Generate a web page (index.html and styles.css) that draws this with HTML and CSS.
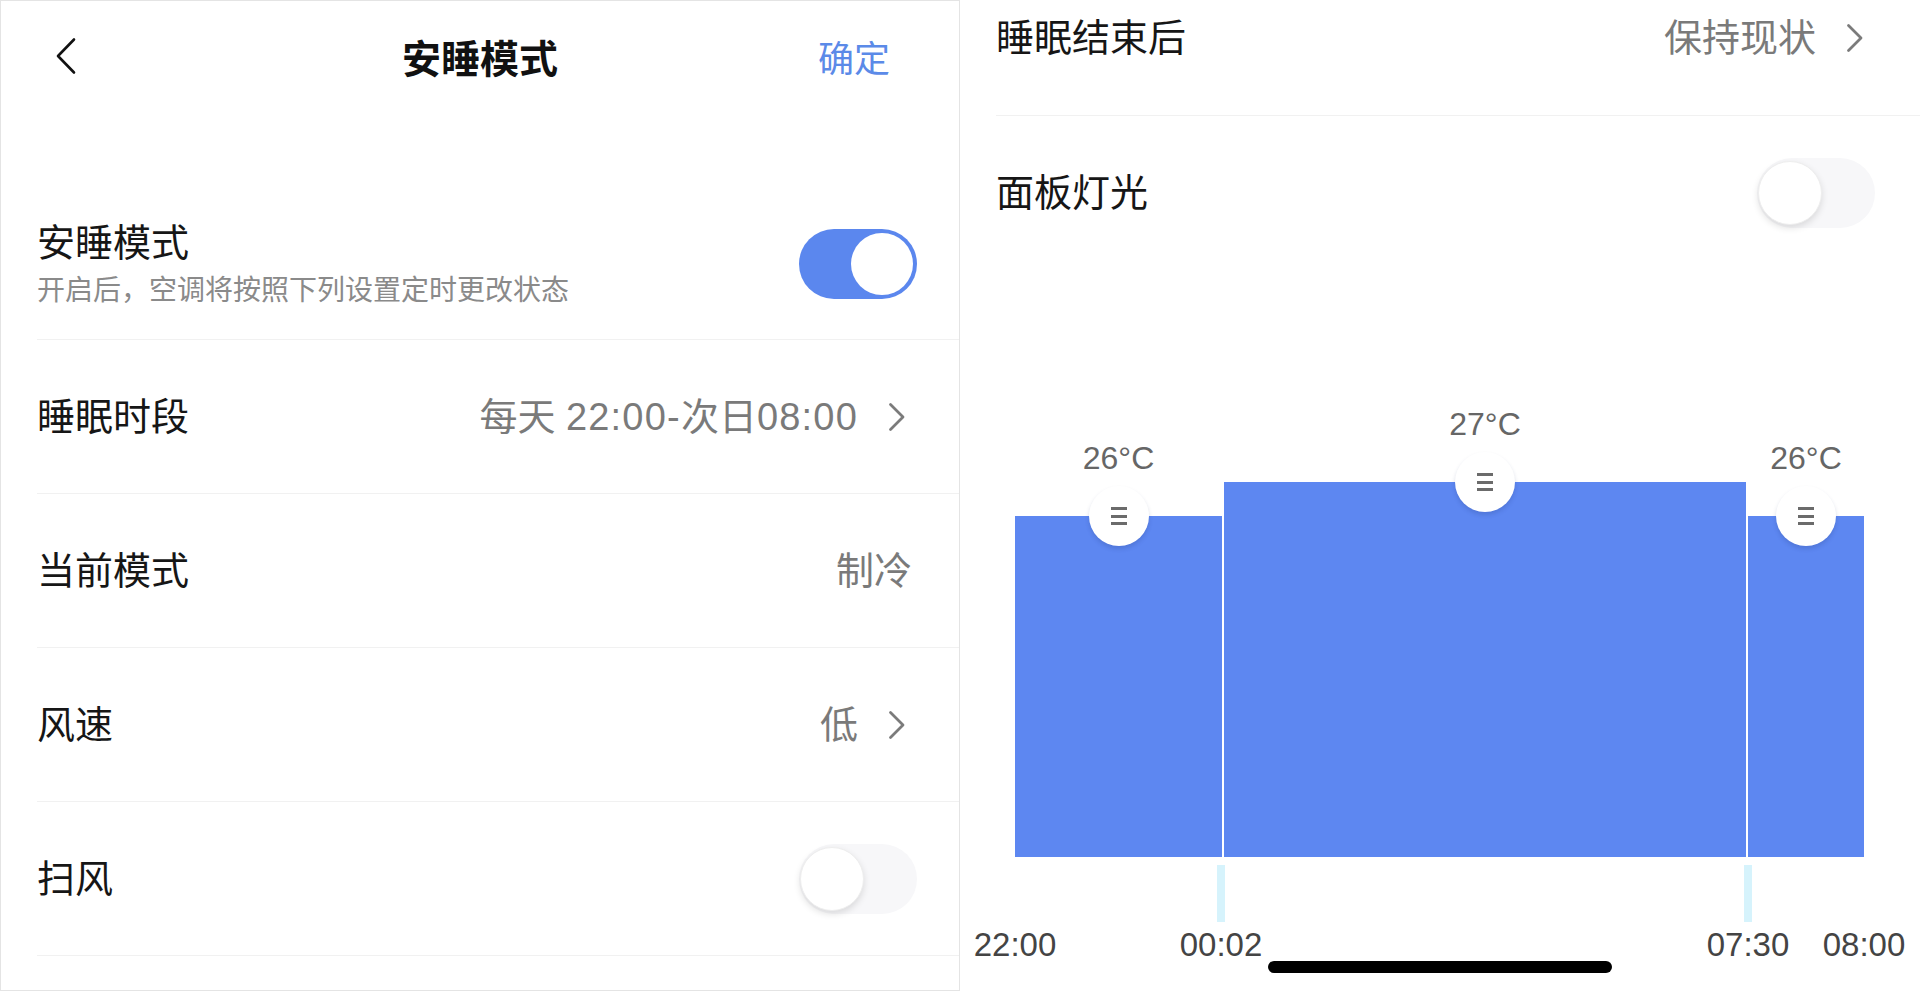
FILE: index.html
```html
<!DOCTYPE html>
<html lang="zh-CN">
<head>
<meta charset="utf-8">
<title>安睡模式</title>
<link rel="stylesheet" href="styles.css">
</head>
<body>
<div class="screen">
  <section class="panel panel-left">
    <header class="nav">
      <span class="nav-back">
        <svg width="22" height="38" viewBox="0 0 22 38"><polyline points="19,2.5 3,19 19,35.5" fill="none" stroke="#111" stroke-width="2.6" stroke-linecap="round" stroke-linejoin="round"/></svg>
      </span>
      <h1 class="nav-title">安睡模式</h1>
      <span class="nav-action">确定</span>
    </header>

    <div class="row row-main">
      <div class="row-text">
        <div class="row-label">安睡模式</div>
        <div class="row-sub">开启后，空调将按照下列设置定时更改状态</div>
      </div>
      <span class="switch switch-on"><span class="knob"></span></span>
    </div>

    <div class="row">
      <span class="row-label">睡眠时段</span>
      <span class="row-value">每天 <span class="num">22:00-</span>次日<span class="num">08:00</span></span>
      <svg class="chev" width="18" height="30" viewBox="0 0 18 30"><polyline points="2.5,2.5 15,15 2.5,27.5" fill="none" stroke="#7b7b7b" stroke-width="2.8" stroke-linecap="round" stroke-linejoin="round"/></svg>
    </div>

    <div class="row">
      <span class="row-label">当前模式</span>
      <span class="row-value row-value-plain">制冷</span>
    </div>

    <div class="row">
      <span class="row-label">风速</span>
      <span class="row-value">低</span>
      <svg class="chev" width="18" height="30" viewBox="0 0 18 30"><polyline points="2.5,2.5 15,15 2.5,27.5" fill="none" stroke="#7b7b7b" stroke-width="2.8" stroke-linecap="round" stroke-linejoin="round"/></svg>
    </div>

    <div class="row">
      <span class="row-label">扫风</span>
      <span class="switch switch-off"><span class="knob"></span></span>
    </div>
  </section>

  <section class="panel panel-right">
    <div class="row row-top">
      <span class="row-label">睡眠结束后</span>
      <span class="row-value">保持现状</span>
      <svg class="chev" width="18" height="30" viewBox="0 0 18 30"><polyline points="2.5,2.5 15,15 2.5,27.5" fill="none" stroke="#7b7b7b" stroke-width="2.8" stroke-linecap="round" stroke-linejoin="round"/></svg>
    </div>

    <div class="row row-plain">
      <span class="row-label">面板灯光</span>
      <span class="switch switch-off"><span class="knob"></span></span>
    </div>

    <div class="chart">
      <div class="seg" style="width:207px">
        <span class="temp">26°C</span>
        <div class="bar" style="height:341px"><span class="handle"><i></i><i></i><i></i></span></div>
      </div>
      <div class="seg" style="width:522px">
        <span class="temp">27°C</span>
        <div class="bar" style="height:375px"><span class="handle"><i></i><i></i><i></i></span></div>
      </div>
      <div class="seg" style="width:116px">
        <span class="temp">26°C</span>
        <div class="bar" style="height:341px"><span class="handle"><i></i><i></i><i></i></span></div>
      </div>
    </div>

    <div class="axis">
      <span class="tick" style="left:202px"></span>
      <span class="tick" style="left:729px"></span>
      <span class="tick-label" style="left:0px">22:00</span>
      <span class="tick-label" style="left:206px">00:02</span>
      <span class="tick-label" style="left:733px">07:30</span>
      <span class="tick-label" style="left:849px">08:00</span>
    </div>

    <span class="home-indicator"></span>
  </section>
</div>
</body>
</html>
```

FILE: styles.css
```css
html, body {
  margin: 0;
  padding: 0;
  background: #fff;
}

body {
  font-family: "Liberation Sans", "Noto Sans CJK SC", sans-serif;
  color: #161616;
}

.screen {
  display: flex;
  width: 1920px;
  height: 992px;
  overflow: hidden;
  background: #fff;
}

.panel {
  box-sizing: border-box;
  background: #fff;
}

.panel-left {
  width: 960px;
  height: 991px;
  border: 1px solid #e4e4e4;
}

.panel-right {
  position: relative;
  flex: 1;
  height: 992px;
}

/* ---------- navigation bar ---------- */
.nav {
  box-sizing: border-box;
  height: 115px;
  display: grid;
  grid-template-columns: 1fr auto 1fr;
  align-items: center;
  padding: 0 69px 6px 69px;
}

.nav-back {
  display: flex;
  align-items: center;
  margin-left: -15px;
}

.nav-title {
  margin: 0;
  font-family: "Noto Sans CJK SC", sans-serif;
  font-size: 39px;
  font-weight: 700;
  line-height: 48px;
  color: #111;
}

.nav-action {
  justify-self: end;
  font-family: "Noto Sans CJK SC", sans-serif;
  font-size: 36px;
  line-height: 44px;
  color: #5b8ae8;
}

/* ---------- list rows ---------- */
.row {
  box-sizing: border-box;
  height: 154px;
  margin-left: 36px;
  padding-right: 42px;
  display: flex;
  align-items: center;
  border-bottom: 1px solid #f1f1f1;
}

.row-main {
  height: 224px;
  padding-top: 72px;
}

.row-text {
  flex: 1;
  display: flex;
  flex-direction: column;
}

.row-label {
  flex: 1;
  font-size: 38px;
  line-height: 48px;
  color: #161616;
}

.row-text .row-label {
  flex: none;
}

.row-sub {
  margin-top: 6px;
  font-size: 28px;
  line-height: 36px;
  color: #8a8a8a;
}

.row-value {
  font-size: 38px;
  line-height: 48px;
  color: #7a7a7a;
}

.row-value .num {
  letter-spacing: 1.2px;
}

.row-value-plain {
  margin-right: 5px;
}

.chev {
  display: block;
  margin-left: 30px;
  margin-right: 11px;
}

.panel-right .row {
  padding-right: 45px;
}

.row-top {
  height: 116px;
  padding-bottom: 39px;
}

.row-plain {
  border-bottom: none;
}

/* ---------- switches ---------- */
.switch {
  position: relative;
  box-sizing: border-box;
  width: 118px;
  height: 70px;
  border-radius: 35px;
  flex: none;
}

.switch-on {
  background: #5b87ee;
}

.switch-on .knob {
  position: absolute;
  top: 4px;
  right: 4px;
  width: 62px;
  height: 62px;
  border-radius: 50%;
  background: #fff;
}

.switch-off {
  background: #f7f7f9;
}

.switch-off .knob {
  position: absolute;
  top: 3px;
  left: 1px;
  box-sizing: border-box;
  width: 64px;
  height: 64px;
  border-radius: 50%;
  background: #fff;
  border: 1px solid #eeeeee;
  box-shadow: 0 3px 7px rgba(0, 0, 0, 0.12);
}

/* ---------- chart ---------- */
.chart {
  display: flex;
  align-items: flex-end;
  gap: 2px;
  margin-left: 55px;
  width: 849px;
  height: 587px;
}

.seg {
  display: flex;
  flex-direction: column;
  align-items: center;
}

.temp {
  font-size: 32px;
  line-height: 32px;
  color: #666;
  margin-bottom: 42px;
}

.bar {
  position: relative;
  align-self: stretch;
  background: #5d87f1;
}

.handle {
  position: absolute;
  left: 50%;
  top: -30px;
  width: 60px;
  height: 60px;
  margin-left: -30px;
  border-radius: 50%;
  background: #fff;
  box-shadow: 0 3px 4px rgba(30, 50, 110, 0.18);
  display: flex;
  flex-direction: column;
  align-items: center;
  justify-content: center;
  gap: 4.5px;
}

.handle i {
  display: block;
  width: 16px;
  height: 3px;
  background: #6b6b6b;
}

.axis {
  position: relative;
  margin-left: 55px;
  width: 849px;
  height: 120px;
}

.tick {
  position: absolute;
  top: 8px;
  width: 8px;
  height: 57px;
  background: #d6f3fc;
}

.tick-label {
  position: absolute;
  top: 71px;
  transform: translateX(-50%);
  font-size: 33px;
  line-height: 34px;
  color: #444;
  white-space: nowrap;
}

.home-indicator {
  position: absolute;
  left: 50%;
  bottom: 19px;
  width: 344px;
  height: 12px;
  margin-left: -172px;
  border-radius: 6px;
  background: #000;
}
```
